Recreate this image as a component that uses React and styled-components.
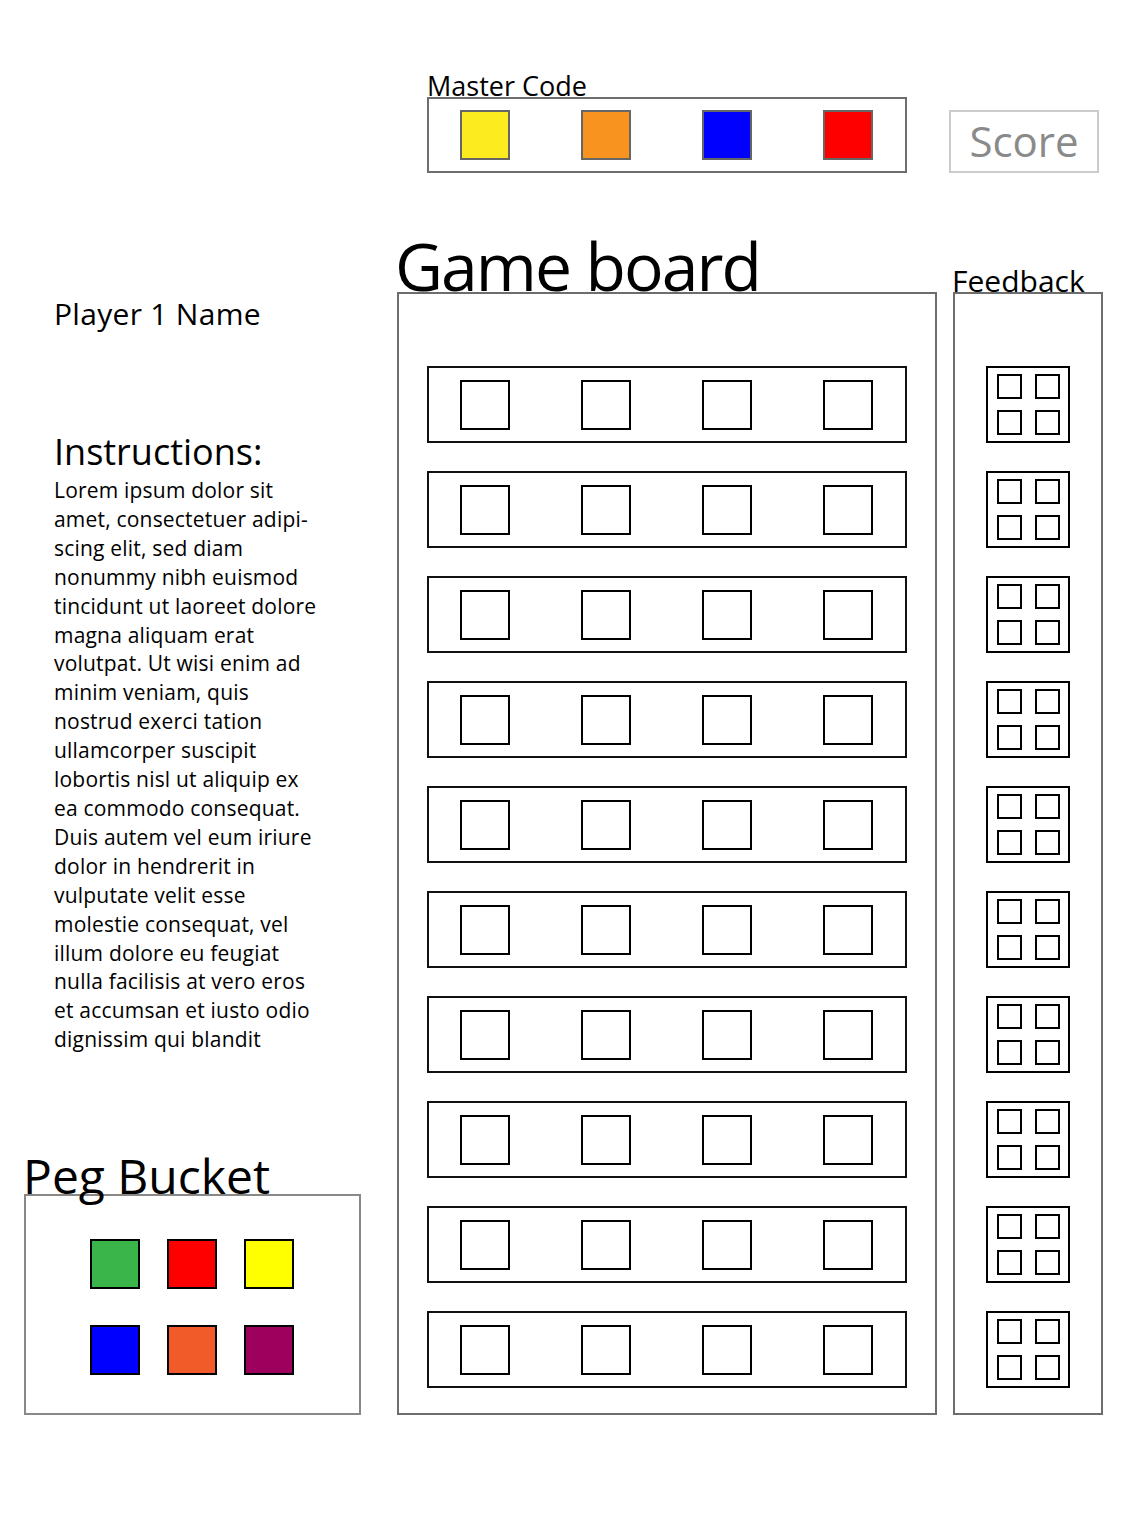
import React from 'react'
import styled, { createGlobalStyle } from 'styled-components'

const GlobalStyle = createGlobalStyle`
	body {
		margin: 0;
		background: #fff;
		color: #000;
		font-family: 'Open Sans', 'Noto Sans', sans-serif;
	}
`

const MASTER = ['#fcec1f', '#f7931e', '#0000ff', '#ff0000']
const BUCKET = ['#39b54a', '#ff0000', '#ffff00', '#0000ff', '#f15a29', '#9e005d']
const ROWS = 10

const INSTRUCTIONS = [
	'Lorem ipsum dolor sit',
	'amet, consectetuer adipi-',
	'scing elit, sed diam',
	'nonummy nibh euismod',
	'tincidunt ut laoreet dolore',
	'magna aliquam erat',
	'volutpat. Ut wisi enim ad',
	'minim veniam, quis',
	'nostrud exerci tation',
	'ullamcorper suscipit',
	'lobortis nisl ut aliquip ex',
	'ea commodo consequat.',
	'Duis autem vel eum iriure',
	'dolor in hendrerit in',
	'vulputate velit esse',
	'molestie consequat, vel',
	'illum dolore eu feugiat',
	'nulla facilisis at vero eros',
	'et accumsan et iusto odio',
	'dignissim qui blandit'
]

export default function App() {
	return (
		<>
			<GlobalStyle />
			<Page>
				<MasterSection>
					<Label>Master Code</Label>
					<PegRow $tone="master">
						{MASTER.map((color) => (
							<Peg key={color} $color={color} $edge="#666" />
						))}
					</PegRow>
				</MasterSection>
				<ScoreBox>Score</ScoreBox>

				<BoardTitle>Game board</BoardTitle>
				<FeedbackTitle>Feedback</FeedbackTitle>

				<Sidebar>
					<div>
						<PlayerName>Player 1 Name</PlayerName>
						<InstructionsTitle>Instructions:</InstructionsTitle>
						<InstructionsText>{INSTRUCTIONS.join('\n')}</InstructionsText>
					</div>
					<div>
						<BucketTitle>Peg Bucket</BucketTitle>
						<Bucket>
							{BUCKET.map((color) => (
								<Peg key={color} $color={color} $edge="#000" />
							))}
						</Bucket>
					</div>
				</Sidebar>

				<Board>
					{Array.from({ length: ROWS }, (_, i) => (
						<PegRow key={i}>
							{[0, 1, 2, 3].map((j) => (
								<Peg key={j} />
							))}
						</PegRow>
					))}
				</Board>

				<Feedback>
					{Array.from({ length: ROWS }, (_, i) => (
						<FeedbackCell key={i}>
							{[0, 1, 2, 3].map((j) => (
								<Hint key={j} />
							))}
						</FeedbackCell>
					))}
				</Feedback>
			</Page>
		</>
	)
}

const Page = styled.div`
	width: 1128px;
	box-sizing: border-box;
	padding: 72px 0 120px 24px;
	display: grid;
	grid-template-columns: 357px 540px 150px;
	grid-template-rows: auto auto auto;
	column-gap: 16px;
`

const MasterSection = styled.div`
	grid-column: 2;
	grid-row: 1;
	padding: 0 30px;
`

const Label = styled.div`
	font-size: 27px;
	line-height: 27px;
	margin: 0 0 -2px 0;
	position: relative;
	z-index: 1;
`

const ScoreBox = styled.div`
	grid-column: 3;
	grid-row: 1;
	align-self: end;
	margin-left: -4px;
	width: 150px;
	height: 63px;
	box-sizing: border-box;
	border: 2px solid #cccccc;
	color: #8a8a8a;
	font-size: 42px;
	line-height: 58px;
	text-align: center;
`

const BoardTitle = styled.h1`
	grid-column: 2;
	grid-row: 2;
	align-self: end;
	margin: 59px 0 -6px -2px;
	font-size: 66px;
	line-height: 66px;
	font-weight: 400;
	letter-spacing: -1.9px;
	position: relative;
	z-index: 1;
`

const FeedbackTitle = styled.div`
	grid-column: 3;
	grid-row: 2;
	align-self: end;
	margin: 0 0 -4px -1px;
	font-size: 30px;
	line-height: 30px;
	position: relative;
	z-index: 1;
`

const Column = styled.div`
	grid-row: 3;
	box-sizing: border-box;
	border: 2px solid #6d6d6d;
	padding: 72px 0 25px;
	display: flex;
	flex-direction: column;
	gap: 28px;
`

const Board = styled(Column)`
	grid-column: 2;
	padding-left: 28px;
	padding-right: 28px;
`

const Feedback = styled(Column)`
	grid-column: 3;
	align-items: center;
`

const PegRow = styled.div`
	box-sizing: border-box;
	height: ${(p) => (p.$tone === 'master' ? 76 : 77)}px;
	border: 2px solid ${(p) => (p.$tone === 'master' ? '#6d6d6d' : '#111')};
	padding: 0 32px 0 31px;
	display: flex;
	align-items: center;
	justify-content: space-between;
`

const Peg = styled.div`
	width: 50px;
	height: 50px;
	box-sizing: border-box;
	border: 2px solid ${(p) => p.$edge || '#000'};
	background: ${(p) => p.$color || '#fff'};
`

const FeedbackCell = styled.div`
	width: 84px;
	height: 77px;
	box-sizing: border-box;
	border: 2px solid #000;
	display: grid;
	grid-template-columns: 25px 25px;
	grid-template-rows: 25px 25px;
	column-gap: 13px;
	row-gap: 11px;
	justify-content: center;
	align-content: center;
`

const Hint = styled.div`
	box-sizing: border-box;
	border: 2px solid #000;
`

const Sidebar = styled.div`
	grid-column: 1;
	grid-row: 3;
	display: flex;
	flex-direction: column;
	justify-content: space-between;
`

const PlayerName = styled.div`
	margin: 4px 0 0 30px;
	font-size: 30px;
	line-height: 35px;
	letter-spacing: 0.3px;
`

const InstructionsTitle = styled.div`
	margin: 101px 0 0 30px;
	font-size: 36px;
	line-height: 40px;
`

const InstructionsText = styled.p`
	margin: 4px 0 0 30px;
	font-size: 21px;
	line-height: 28.9px;
	letter-spacing: 0.2px;
	white-space: pre-line;
`

const BucketTitle = styled.div`
	font-size: 48px;
	line-height: 48px;
	margin: 0 0 -6px -1px;
	position: relative;
	z-index: 1;
`

const Bucket = styled.div`
	width: 337px;
	height: 221px;
	box-sizing: border-box;
	border: 2px solid #888;
	padding: 43px 0 0 64px;
	display: grid;
	grid-template-columns: repeat(3, 50px);
	grid-auto-rows: 50px;
	column-gap: 27px;
	row-gap: 36px;
`
